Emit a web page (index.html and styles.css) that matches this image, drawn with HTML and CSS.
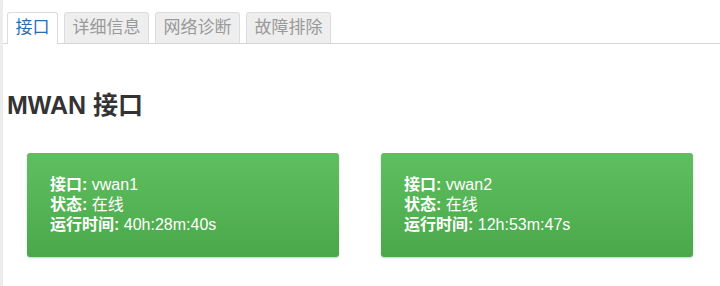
FILE: index.html
```html
<!DOCTYPE html>
<html lang="zh">
<head>
<meta charset="utf-8">
<link rel="stylesheet" href="styles.css">
</head>
<body>
<div class="page">
  <ul class="tabs">
    <li class="tab active">接口</li>
    <li class="tab">详细信息</li>
    <li class="tab">网络诊断</li>
    <li class="tab">故障排除</li>
  </ul>
  <h2 class="title">MWAN 接口</h2>
  <div class="cards">
    <div class="card">
      <div><b>接口:</b> vwan1</div>
      <div><b>状态:</b> 在线</div>
      <div><b>运行时间:</b> 40h:28m:40s</div>
    </div>
    <div class="card">
      <div><b>接口:</b> vwan2</div>
      <div><b>状态:</b> 在线</div>
      <div><b>运行时间:</b> 12h:53m:47s</div>
    </div>
  </div>
</div>
</body>
</html>
```
FILE: styles.css
```css
html, body {
  margin: 0;
  padding: 0;
  background: #fff;
}
body {
  font-family: "Liberation Sans", Arial, "Noto Sans CJK SC", sans-serif;
  color: #333;
  width: 720px;
  height: 286px;
  overflow: hidden;
}
.page {
  border-left: 3px solid #ececec;
  min-height: 286px;
  box-sizing: border-box;
}
.tabs {
  list-style: none;
  margin: 0;
  padding: 12px 0 0 4px;
  display: flex;
  gap: 6px;
  border-bottom: 1px solid #d6d6d6;
}
.tab {
  font-size: 17px;
  line-height: 30px;
  padding: 0 7.5px;
  background: #eeeeee;
  color: #9a9a9a;
  border: 1px solid #dcdcdc;
  border-bottom: none;
  border-radius: 3px 3px 0 0;
}
.tab.active {
  background: #fff;
  color: #2f6bb0;
  margin-bottom: -1px;
  padding-bottom: 1px;
}
.title {
  margin: 48px 0 0 4px;
  font-size: 25px;
  font-weight: bold;
  line-height: 26px;
  color: #333;
}
.cards {
  display: flex;
  gap: 42px;
  margin: 35px 0 0 24px;
}
.card {
  width: 312px;
  box-sizing: border-box;
  padding: 22px 23px;
  font-size: 16px;
  line-height: 20px;
  color: #fff;
  background: linear-gradient(#5fbf5f, #4aa84a);
  border-radius: 3px;
  box-shadow: 0 1px 2px rgba(0,0,0,0.2);
}
.card b {
  font-weight: bold;
}
```
